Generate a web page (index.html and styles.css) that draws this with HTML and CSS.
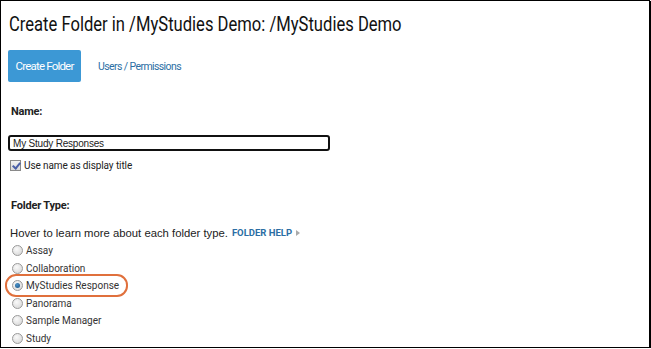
FILE: index.html
```html
<!DOCTYPE html>
<html lang="en">
<head>
    <meta charset="UTF-8">
    <title>Create Folder</title>
    <link rel="stylesheet" href="styles.css">
</head>
<body>
    <div class="frame">
        <h1 class="title">Create Folder in /MyStudies Demo: /MyStudies Demo</h1>

        <div class="tabs">
            <button class="btn-primary">Create Folder</button>
            <a class="tab-link">Users / Permissions</a>
        </div>

        <div class="section">
            <div class="field-label">Name:</div>
            <input class="name-input" type="text" value="My Study Responses">
            <label class="check-row">
                <input type="checkbox" class="check" checked>
                <span>Use name as display title</span>
            </label>
        </div>

        <div class="section">
            <div class="field-label">Folder Type:</div>
            <p class="hint">Hover to learn more about each folder type. <a class="help-link">FOLDER HELP</a><span class="arrow"></span></p>
            <ul class="types">
                <li><label><input type="radio" name="type" class="radio"> Assay</label></li>
                <li><label><input type="radio" name="type" class="radio"> Collaboration</label></li>
                <li class="marked"><label><input type="radio" name="type" class="radio" checked> MyStudies Response</label></li>
                <li><label><input type="radio" name="type" class="radio"> Panorama</label></li>
                <li><label><input type="radio" name="type" class="radio"> Sample Manager</label></li>
                <li><label><input type="radio" name="type" class="radio"> Study</label></li>
            </ul>
        </div>
    </div>
</body>
</html>
```

FILE: styles.css
```css
html, body {
    margin: 0;
    padding: 0;
}

body {
    font-family: Roboto, "Liberation Sans", Arial, sans-serif;
    color: #222;
    background: #fff;
}

.frame {
    box-sizing: border-box;
    width: 650px;
    height: 348px;
    border: 1px solid #000;
    box-shadow: 1px 1px 0 #000;
    padding: 0 0 0 7px;
    overflow: hidden;
}

/* the heading in the shot is a condensed face */
.title {
    margin: 9px 0 0 1px;
    font-size: 21px;
    font-weight: 400;
    line-height: 28px;
    color: #111;
    white-space: nowrap;
    transform: scaleX(0.79);
    transform-origin: left center;
}

.tabs {
    display: flex;
    align-items: center;
    margin-top: 12px;
}

.btn-primary {
    width: 73px;
    height: 32px;
    border: none;
    border-radius: 2px;
    background: #3c98d5;
    color: #fff;
    font-family: Roboto, sans-serif;
    font-size: 11.5px;
    letter-spacing: -0.8px;
    padding: 0;
}

.tab-link {
    margin-left: 17px;
    font-size: 10.5px;
    letter-spacing: -0.6px;
    color: #2b6ea4;
}

.section {
    margin-left: 3px;
}

.field-label {
    font-size: 11px;
    font-weight: 700;
    letter-spacing: -0.2px;
    margin-top: 22px;
    line-height: 16px;
}

.name-input {
    display: block;
    box-sizing: border-box;
    width: 322px;
    height: 16px;
    margin: 15px 0 0 -3px;
    border: 2px solid #111;
    border-radius: 3px;
    padding: 0 3px;
    font-family: "Liberation Sans", Arial, sans-serif;
    font-size: 10px;
    letter-spacing: -0.2px;
    color: #222;
    outline: none;
}

.check-row {
    display: flex;
    align-items: center;
    margin-top: 9px;
    font-size: 10px;
    letter-spacing: -0.1px;
}

.check {
    appearance: none;
    width: 11px;
    height: 11px;
    margin: 0 3px 0 -1px;
    border: 1px solid #8a8a8a;
    background: linear-gradient(#f2f2f2, #d9d9d9);
    position: relative;
}

.check:checked::after {
    content: "";
    position: absolute;
    left: 3px;
    top: 0;
    width: 3px;
    height: 6px;
    border: solid #4a5fa8;
    border-width: 0 2px 2px 0;
    transform: rotate(40deg);
}

.section + .section .field-label {
    margin-top: 27px;
}

.hint {
    margin: 11px 0 0 -1px;
    font-family: "Liberation Sans", Arial, sans-serif;
    font-size: 11.3px;
    line-height: 16px;
    display: flex;
    align-items: center;
}

.help-link {
    margin-left: 4px;
    font-family: Roboto, sans-serif;
    font-weight: 700;
    font-size: 9.5px;
    color: #2b6ea4;
}

.arrow {
    width: 0;
    height: 0;
    margin-left: 4px;
    border-left: 4px solid #aaa;
    border-top: 3.5px solid transparent;
    border-bottom: 3.5px solid transparent;
}

.types {
    list-style: none;
    margin: 1px 0 0;
    padding: 0;
}

.types li {
    height: 17.5px;
    display: flex;
    align-items: center;
    font-size: 10px;
    color: #333;
}

.types label {
    display: flex;
    align-items: center;
}

.types li.marked {
    position: relative;
}

.types li.marked::before {
    content: "";
    position: absolute;
    left: -6px;
    top: -3px;
    width: 123px;
    height: 23px;
    box-sizing: border-box;
    border: 2px solid #e0703c;
    border-radius: 11px;
}

.radio {
    appearance: none;
    width: 11px;
    height: 11px;
    margin: 0 3px 0 1px;
    border: 1px solid #9a9a9a;
    border-radius: 50%;
    background: radial-gradient(circle at 40% 35%, #fafafa, #d2d2d2);
    box-sizing: border-box;
    position: relative;
}

.radio:checked::after {
    content: "";
    position: absolute;
    left: 2px;
    top: 2px;
    width: 5px;
    height: 5px;
    border-radius: 50%;
    background: radial-gradient(circle at 40% 35%, #4a93c9, #1a4f82);
}
```
